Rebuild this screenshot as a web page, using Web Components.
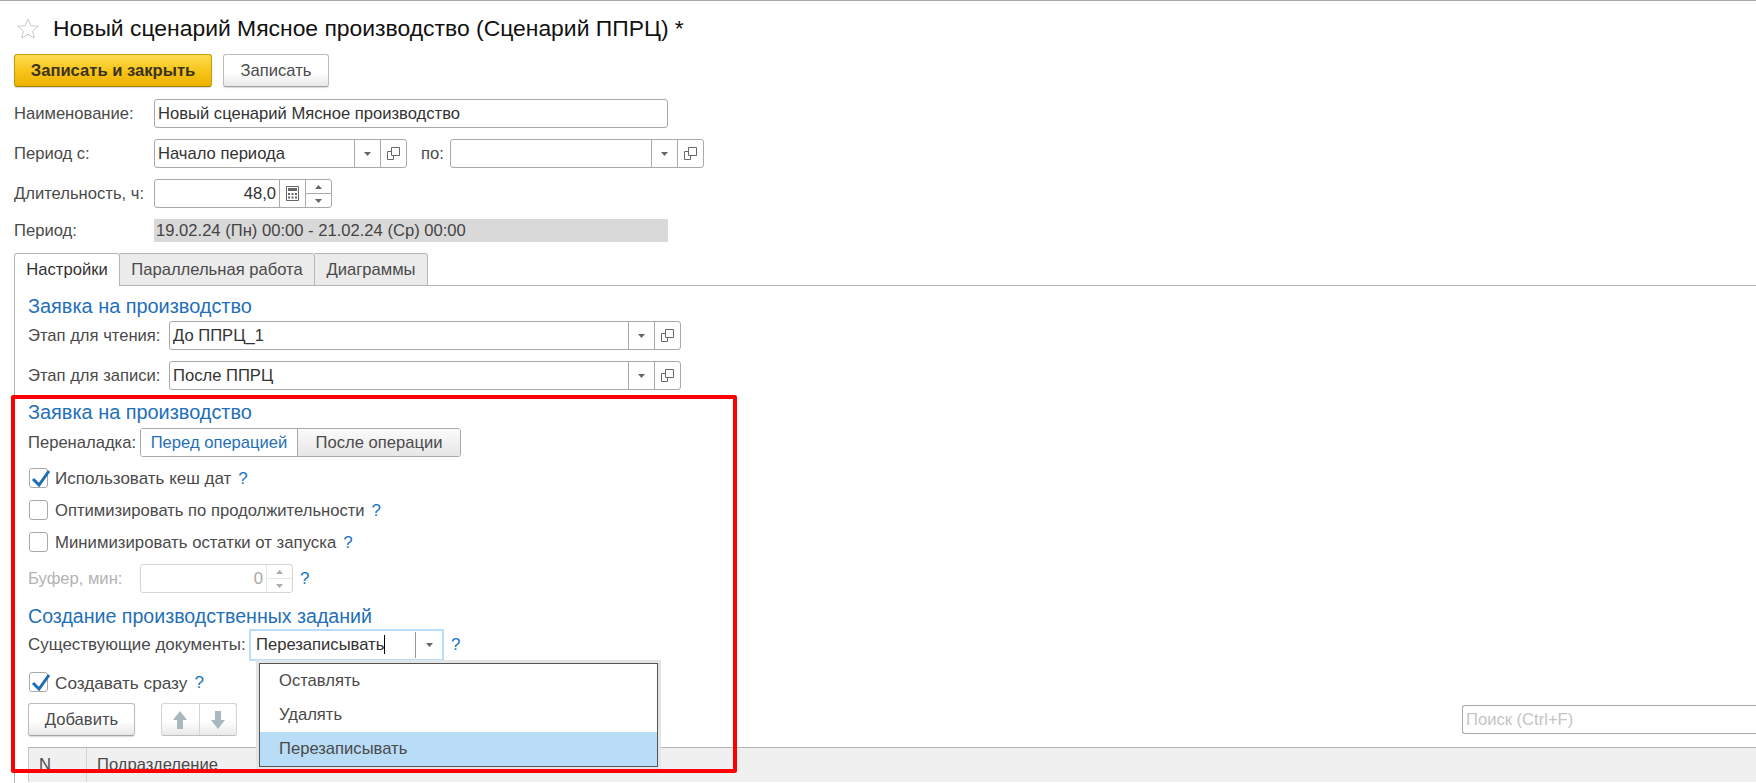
<!DOCTYPE html>
<html lang="ru">
<head>
<meta charset="utf-8">
<title>Сценарий ППРЦ</title>
<style>
  html, body { margin: 0; padding: 0; background: #fff; }
  body {
    width: 1756px; height: 783px; overflow: hidden; position: relative;
    border-top: 1px solid #a9a9a9; box-sizing: border-box;
    font: 16.6px "Liberation Sans", Arial, sans-serif; color: #4a4a4a;
  }
  .btns { display: flex; gap: 11px; padding-left: 14px; margin-top: 12px; }
  .top { display: flex; flex-direction: column; gap: 11px; margin: 12px 0 0 14px; }
  .panel { display: flow-root; margin-left: 14px; border-left: 1px solid #b5b5b5; padding-left: 13px; height: 497px; }
  .tools { display: flex; align-items: center; gap: 26px; margin-top: 11px; height: 33px; }
</style>
</head>
<body>

<page-title style="margin-top:13px">Новый сценарий Мясное производство (Сценарий ППРЦ) *</page-title>

<div class="btns">
  <app-button primary style="width:198px">Записать и закрыть</app-button>
  <app-button style="width:106px">Записать</app-button>
</div>

<div class="top">
  <form-row label="Наименование:" label-width="140"><text-field width="514" value="Новый сценарий Мясное производство"></text-field></form-row>
  <form-row label="Период с:" label-width="140">
    <text-field width="253" value="Начало периода" drop copy></text-field>
    <form-label style="margin-left:14px;width:29px">по:</form-label>
    <text-field width="254" drop copy></text-field>
  </form-row>
  <form-row label="Длительность, ч:" label-width="140"><text-field width="178" value="48,0" right calc spin></text-field></form-row>
  <form-row label="Период:" label-width="140" style="height:23px"><read-only-box>19.02.24 (Пн) 00:00 - 21.02.24 (Ср) 00:00</read-only-box></form-row>
</div>

<tab-bar style="margin-top:11px">
  <tab-item active style="width:106px">Настройки</tab-item>
  <tab-item style="width:195px">Параллельная работа</tab-item>
  <tab-item style="width:113px">Диаграммы</tab-item>
</tab-bar>

<div class="panel">
  <group-title style="margin-top:10px">Заявка на производство</group-title>
  <form-row label="Этап для чтения:" label-width="141" style="margin-top:3px"><text-field width="512" value="До ППРЦ_1" drop copy></text-field></form-row>
  <form-row label="Этап для записи:" label-width="141" style="margin-top:11px"><text-field width="512" value="После ППРЦ" drop copy></text-field></form-row>

  <group-title style="margin-top:12px">Заявка на производство</group-title>
  <form-row label="Переналадка:" label-width="112" style="margin-top:4px">
    <seg-switch>
      <seg-option active style="width:156px">Перед операцией</seg-option>
      <seg-option style="width:163px">После операции</seg-option>
    </seg-switch>
  </form-row>

  <check-field checked style="margin-top:11px;font-size:17px">Использовать кеш дат<help-mark></help-mark></check-field>
  <check-field style="margin-top:12px">Оптимизировать по продолжительности<help-mark></help-mark></check-field>
  <check-field style="margin-top:12px;font-size:16.75px">Минимизировать остатки от запуска<help-mark></help-mark></check-field>

  <form-row label="Буфер, мин:" label-width="112" muted style="margin-top:12px">
    <text-field width="153" value="0" right spin disabled></text-field><help-mark></help-mark>
  </form-row>

  <group-title style="margin-top:13px;font-size:19.6px">Создание производственных заданий</group-title>
  <form-row label="Существующие документы:" label-width="221" style="height:32px;font-size:16.95px;--label-shift:2px">
    <text-field width="195" value="Перезаписывать" drop focused style="font-size:16.6px"></text-field><help-mark></help-mark>
  </form-row>

  <check-field checked style="margin-top:12px;font-size:17.2px">Создавать сразу<help-mark></help-mark></check-field>

  <div class="tools">
    <app-button style="width:107px">Добавить</app-button>
    <move-buttons></move-buttons>
    <search-box style="margin-left:auto">Поиск (Ctrl+F)</search-box>
  </div>

  <table-head style="margin-top:11px"></table-head>
</div>

<drop-list style="left:255px;top:659px">
  <drop-item>Оставлять</drop-item>
  <drop-item>Удалять</drop-item>
  <drop-item selected>Перезаписывать</drop-item>
</drop-list>

<red-frame></red-frame>

<script>
  const ARROW_DOWN = '<svg width="7" height="4" viewBox="0 0 7 4"><path d="M0 0h7L3.5 4z" fill="#666"/></svg>';
  const ARROW_UP = '<svg width="7" height="4" viewBox="0 0 7 4"><path d="M0 4h7L3.5 0z" fill="#666"/></svg>';
  const COPY_ICON = '<svg width="13" height="13" viewBox="0 0 13 13" fill="none" stroke="#666"><path d="M4.500 .5h8v8h-8z"/><path d="M4.500 4.500h-4v8h6v-4"/></svg>';
  const CALC_ICON = '<svg width="13" height="15" viewBox="0 0 13 15"><path d="M.5.5h12v14H.5z" fill="#fff" stroke="#666"/><path d="M2 2h9v3H2z" fill="#666"/><path d="M2 7h2v2H2zM5.500 7h2v2h-2zM9 7h2v2H9zM2 10.500h2v2H2zM5.500 10.500h2v2h-2zM9 10.500h2v2H9z" fill="#666"/></svg>';

  // Base class: every element only declares its own template
  class ShadowEl extends HTMLElement {
    constructor() {
      super();
      this.attachShadow({ mode: 'open' });
    }
    connectedCallback() {
      this.shadowRoot.innerHTML = this.render();
    }
  }

  class PageTitle extends ShadowEl {
    render() {
      return `<style>
        :host { display: flex; align-items: center; height: 28px; padding-left: 17px; font-size: 22.9px; color: #111; }
        svg { margin-right: 14px; flex: none; }
      </style>
      <svg width="22" height="21" viewBox="0 0 22 21"><path d="M11 1l2.900 6.700 7.200.6-5.500 4.700 1.700 7L11 16.300 4.700 20l1.700-7L.9 8.300l7.200-.6z" fill="#fff" stroke="#c6c9cc"/></svg>
      <slot></slot>`;
    }
  }

  class AppButton extends ShadowEl {
    render() {
      return `<style>
        :host {
          display: flex; align-items: center; justify-content: center; height: 33px; box-sizing: border-box;
          border: 1px solid #bdbdbd; border-bottom-color: #a3a3a3; border-radius: 3px;
          background: linear-gradient(#fff, #fff 55%, #e8e8e8); color: #4a4a4a;
          box-shadow: 0 1px 1px #d8d8d8;
        }
        :host([primary]) {
          border-color: #c79a08; border-bottom-color: #a98204; color: #3a3320; font-weight: bold;
          background: linear-gradient(#ffdc50, #f7c51c 50%, #edb200);
        }
      </style><slot></slot>`;
    }
  }

  class FormRow extends ShadowEl {
    render() {
      const muted = this.hasAttribute('muted');
      return `<style>
        :host { display: flex; align-items: center; height: 29px; color: ${muted ? '#b3b3b3' : '#4a4a4a'}; }
        .label { flex: none; width: ${this.getAttribute('label-width')}px; white-space: nowrap; padding-top: var(--label-shift, 0); }
        ::slotted(help-mark) { padding-top: var(--label-shift, 0); }
      </style>
      <span class="label">${this.getAttribute('label')}</span><slot></slot>`;
    }
  }

  class FormLabel extends ShadowEl {
    render() {
      return `<style>:host { display: block; flex: none; }</style><slot></slot>`;
    }
  }

  class TextField extends ShadowEl {
    render() {
      const has = name => this.hasAttribute(name);
      const value = this.getAttribute('value') || '';
      const stepper = `<span class="btn spin"><i>${ARROW_UP}</i><i>${ARROW_DOWN}</i></span>`;
      return `<style>
        :host {
          display: flex; flex: none; height: 29px; box-sizing: border-box; width: ${this.getAttribute('width')}px;
          border: 1px solid #a9a9a9; border-radius: 3px; background: #fff; color: #333;
        }
        :host([disabled]) { border-color: #d4d4d4; color: #a8a8a8; }
        :host([focused]) {
          height: 32px; border: 2px solid #b9dcf9; border-radius: 0; margin-top: 1px;
        }
        .value { flex: 1; min-width: 0; display: flex; align-items: center; padding: 0 3px; white-space: nowrap; }
        :host([right]) .value { justify-content: flex-end; }
        :host([focused]) .value { padding-left: 5px; }
        .caret { width: 1px; height: 19px; background: #000; flex: none; }
        .btn { flex: none; width: 26px; box-sizing: border-box; border-left: 1px solid #a9a9a9; display: flex; align-items: center; justify-content: center; }
        :host([disabled]) .btn { border-color: #d4d4d4; opacity: .55; }
        :host([focused]) .btn { width: 27px; margin: 1px 0; border-color: #9a9a9a; }
        .spin { flex-direction: column; }
        .spin i { flex: 1; width: 100%; display: flex; align-items: center; justify-content: center; }
        .spin i + i { border-top: 1px solid #a9a9a9; }
        :host([disabled]) .spin i + i { border-color: #d4d4d4; }
      </style>
      <span class="value">${value}${has('focused') ? '<span class="caret"></span>' : ''}</span>
      ${has('drop') ? `<span class="btn">${ARROW_DOWN}</span>` : ''}
      ${has('copy') ? `<span class="btn">${COPY_ICON}</span>` : ''}
      ${has('calc') ? `<span class="btn">${CALC_ICON}</span>` : ''}
      ${has('spin') ? stepper : ''}`;
    }
  }

  class ReadOnlyBox extends ShadowEl {
    render() {
      return `<style>
        :host { display: flex; align-items: center; width: 514px; height: 23px; box-sizing: border-box; padding-left: 2px; background: #d9d9d9; color: #444; }
      </style><slot></slot>`;
    }
  }

  class TabBar extends ShadowEl {
    render() {
      return `<style>
        :host { display: flex; height: 33px; padding-left: 14px; }
        .rest { flex: 1; border-bottom: 1px solid #b5b5b5; }
      </style><slot></slot><div class="rest"></div>`;
    }
  }

  class TabItem extends ShadowEl {
    render() {
      return `<style>
        :host {
          display: flex; align-items: center; justify-content: center; box-sizing: border-box;
          border: 1px solid #b5b5b5; border-left: 0; border-radius: 0 3px 0 0; background: #ebebeb; color: #4a4a4a;
        }
        :host([active]) { background: #fff; border-left: 1px solid #b5b5b5; border-bottom: 0; border-radius: 3px 3px 0 0; color: #333; }
      </style><slot></slot>`;
    }
  }

  class GroupTitle extends ShadowEl {
    render() {
      return `<style>
        :host { display: flex; align-items: center; height: 22px; padding-bottom: 1px; box-sizing: border-box; font-size: 19.900px; color: #1f6fba; }
      </style><slot></slot>`;
    }
  }

  class SegSwitch extends ShadowEl {
    render() {
      return `<style>
        :host { display: flex; height: 29px; box-sizing: border-box; border: 1px solid #a9a9a9; border-radius: 3px; overflow: hidden; }
      </style><slot></slot>`;
    }
  }

  class SegOption extends ShadowEl {
    render() {
      return `<style>
        :host {
          display: flex; align-items: center; justify-content: center; box-sizing: border-box;
          border-left: 1px solid #a9a9a9; background: linear-gradient(#fbfbfb, #e6e6e6); color: #4a4a4a;
        }
        :host([active]) { border-left: 0; background: #fff; color: #1f6fba; }
      </style><slot></slot>`;
    }
  }

  class CheckField extends ShadowEl {
    render() {
      const mark = this.hasAttribute('checked')
        ? '<svg width="23" height="20" viewBox="0 0 23 20"><path d="M4 11l6 6L20 3" fill="none" stroke="#1d6db5" stroke-width="3"/></svg>'
        : '';
      return `<style>
        :host { display: flex; align-items: center; height: 20px; padding-left: 1px; }
        .box { flex: none; width: 19px; height: 20px; box-sizing: border-box; border: 1px solid #a9a9a9; border-radius: 3px; margin-right: 7px; position: relative; }
        .text { display: flex; align-items: center; padding-top: 2px; }
        svg { position: absolute; left: -1px; top: -1px; }
      </style><span class="box">${mark}</span><span class="text"><slot></slot></span>`;
    }
  }

  class HelpMark extends ShadowEl {
    render() {
      return `<style>
        :host { display: inline-block; margin-left: 7px; color: #1a73c0; font-size: 17px; }
      </style>?`;
    }
  }

  class MoveButtons extends ShadowEl {
    render() {
      const arrow = d => `<svg width="16" height="20" viewBox="0 0 16 20"><path d="${d}" fill="#a9b7be"/></svg>`;
      return `<style>
        :host {
          display: flex; width: 76px; height: 33px; box-sizing: border-box;
          border: 1px solid #d4d4d4; border-bottom-color: #bcbcbc; border-radius: 3px;
          background: linear-gradient(#fff, #fff 55%, #e9e9e9);
        }
        span { flex: 1; display: flex; align-items: center; justify-content: center; }
        span + span { border-left: 1px solid #d4d4d4; }
      </style>
      <span>${arrow('M8 1l7 9h-4v9H5v-9H1z')}</span>
      <span>${arrow('M8 19l7-9h-4V1H5v9H1z')}</span>`;
    }
  }

  class SearchBox extends ShadowEl {
    render() {
      return `<style>
        :host {
          display: flex; align-items: center; width: 294px; height: 29px; box-sizing: border-box; padding-left: 3px;
          border: 1px solid #a9a9a9; border-right: 0; border-radius: 3px 0 0 3px; color: #c4c4c4;
        }
      </style><slot></slot>`;
    }
  }

  class TableHead extends ShadowEl {
    render() {
      return `<style>
        :host {
          display: flex; height: 35px; box-sizing: border-box; border-top: 1px solid #b5b5b5; border-left: 1px solid #c8c8c8;
          background: #f0f0f0; color: #4a4a4a; line-height: 34px;
        }
        .n { width: 58px; box-sizing: border-box; padding-left: 10px; border-right: 1px solid #d4d4d4; }
        .dept { padding-left: 10px; }
      </style><div class="n">N</div><div class="dept">Подразделение</div>`;
    }
  }

  class DropList extends ShadowEl {
    render() {
      return `<style>
        :host {
          position: absolute; display: flex; flex-direction: column; width: 397px; box-sizing: content-box;
          border: 1px solid #555; box-shadow: 0 0 0 3px #e4e4e4; background: #fff; margin: 3px 0 0 4px;
        }
      </style><slot></slot>`;
    }
  }

  class DropItem extends ShadowEl {
    render() {
      return `<style>
        :host { display: flex; align-items: center; height: 34px; padding-left: 19px; color: #4a4a4a; }
        :host([selected]) { background: #b9dcf7; }
      </style><slot></slot>`;
    }
  }

  class RedFrame extends ShadowEl {
    render() {
      return `<style>
        :host {
          position: absolute; left: 11px; top: 394px; width: 726px; height: 378px; box-sizing: border-box;
          border: 4px solid #f00; border-radius: 2px; pointer-events: none;
        }
      </style>`;
    }
  }

  customElements.define('page-title', PageTitle);
  customElements.define('app-button', AppButton);
  customElements.define('form-row', FormRow);
  customElements.define('form-label', FormLabel);
  customElements.define('text-field', TextField);
  customElements.define('read-only-box', ReadOnlyBox);
  customElements.define('tab-bar', TabBar);
  customElements.define('tab-item', TabItem);
  customElements.define('group-title', GroupTitle);
  customElements.define('seg-switch', SegSwitch);
  customElements.define('seg-option', SegOption);
  customElements.define('check-field', CheckField);
  customElements.define('help-mark', HelpMark);
  customElements.define('move-buttons', MoveButtons);
  customElements.define('search-box', SearchBox);
  customElements.define('table-head', TableHead);
  customElements.define('drop-list', DropList);
  customElements.define('drop-item', DropItem);
  customElements.define('red-frame', RedFrame);
</script>
</body>
</html>
